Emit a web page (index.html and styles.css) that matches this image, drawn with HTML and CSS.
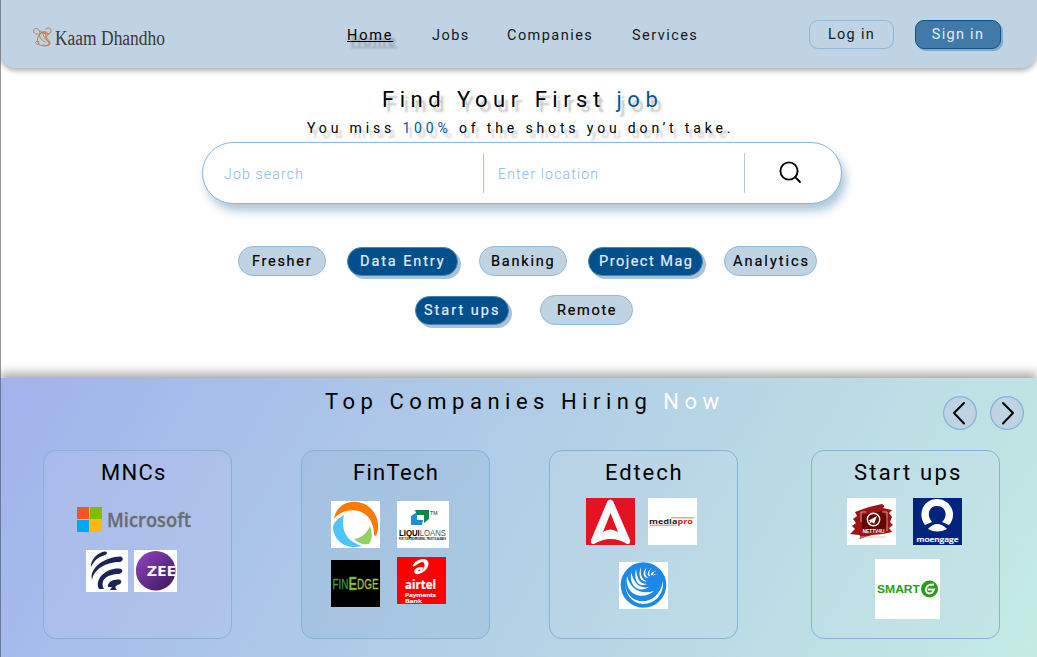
FILE: index.html
```html
<!DOCTYPE html>
<html lang="en">
<head>
<meta charset="utf-8">
<title>Kaam Dhandho</title>
<link rel="stylesheet" href="styles.css">
</head>
<body>
<div class="page">
  <header class="header">
    <svg class="brand" width="136" height="30" viewBox="0 0 136 30">
      <g fill="none" stroke="#c07b4c" stroke-width="1" stroke-linecap="round">
        <path d="M5 8C1 9-1 4 2 3C5 1 7 5 7 8M13 3C16 0 20 4 17 7C14 10 9 6 7 5"/>
        <path d="M6 9C11 2 18 8 14 10C11 12 18 14 17 18C15 21 8 20 4 18C1 17 3 14 6 16"/>
        <path d="M6 18C2 14 6 6 11 6C15 6 11 12 14 14C19 18 14 21 10 19"/>
        <path d="M7 8C5 10 8 14 12 16M10 6C9 10 13 13 16 17"/>
      </g>
      <text class="brand-name" x="22" y="19" textLength="110" lengthAdjust="spacingAndGlyphs">Kaam Dhandho</text>
    </svg>
    <nav class="nav">
      <a class="nav-link nav-home">Home</a>
      <a class="nav-link nav-jobs">Jobs</a>
      <a class="nav-link nav-companies">Companies</a>
      <a class="nav-link nav-services">Services</a>
    </nav>
    <div class="auth">
      <button class="btn">Log in</button>
      <button class="btn btn-primary">Sign in</button>
    </div>
  </header>

  <main class="hero">
    <h1 class="title">Find Your First <span class="accent">job</span></h1>
    <p class="tagline">You miss <span class="accent">100%</span> of the shots you don’t take.</p>
    <div class="search">
      <span class="field field-job">Job search</span>
      <span class="field field-place">Enter location</span>
      <span class="search-go">
        <svg width="24" height="24" viewBox="0 0 24 24" fill="none" stroke="#000" stroke-width="1.9" stroke-linecap="round"><circle cx="10" cy="10" r="8.6"/><path d="M16.2 16.2L21 21"/></svg>
      </span>
    </div>
    <div class="chips">
      <span class="chip fresher">Fresher</span>
      <span class="chip chip-on data">Data Entry</span>
      <span class="chip banking">Banking</span>
      <span class="chip chip-on project">Project Mag</span>
      <span class="chip analytics">Analytics</span>
    </div>
    <div class="chips chips-second">
      <span class="chip chip-on startups">Start ups</span>
      <span class="chip remote">Remote</span>
    </div>
  </main>

  <section class="companies">
    <div class="companies-head">
      <h2 class="companies-title">Top Companies Hiring <span class="now">Now</span></h2>
      <div class="arrows">
        <span class="arrow"><svg width="34" height="34" viewBox="0 0 34 34"><path d="M21 7L11 17L21 27.500"/></svg></span>
        <span class="arrow"><svg width="34" height="34" viewBox="0 0 34 34"><path d="M13 7L23 17L13 27.500"/></svg></span>
      </div>
    </div>
    <div class="cards">
      <article class="card card-mnc">
        <h3 class="card-title mnc">MNCs</h3>
        <svg class="logo-microsoft" width="120" height="30" viewBox="0 0 120 30">
          <path fill="#f65427" d="M0 0h12v12H0z"/><path fill="#80bc06" d="M13 0h12v12H13z"/><path fill="#05a6f0" d="M0 13h12v12H0z"/><path fill="#ffba08" d="M13 13h12v12H13z"/>
          <text x="30" y="20" font-family="Open Sans, sans-serif" font-weight="600" font-size="20" fill="#6b6c70" stroke="#6b6c70" stroke-width=".3" textLength="84" lengthAdjust="spacingAndGlyphs">Microsoft</text>
        </svg>
        <div class="logos mnc-row">
          <svg width="42" height="42" viewBox="0 0 42 42"><path fill="#fff" d="M0 0h42v42H0z"/><g fill="#1d2353"><path d="M5 17C4 10 12 2 19 1.500C22 1.500 21.500 4.500 18 5.500C12 7 8 11 5 17z"/><path d="M6 30C3 17 20 7 34 6.500C38 7 37.500 11 34 12C20 12 8 19 6 30z"/><path d="M13 39C8 29 20 18 33 18.500C38 19 37 23 33 24C23 24 13 29 18 39z"/><path d="M22 37C21 32 27 29 33 29.500C36 30 36 33 33 34.500C30 35 28 37 31 40L24 40L26 37z"/></g></svg>
          <svg width="43" height="42" viewBox="0 0 43 42"><defs><linearGradient id="zee" x1="0" y1="0" x2="1" y2="1"><stop stop-color="#9347c2"/><stop offset="1" stop-color="#3a1459"/></linearGradient></defs><path fill="#fff" d="M0 0h43v42H0z"/><circle cx="21.700" cy="20.700" r="19.800" fill="url(#zee)"/><text x="13" y="26" font-family="Open Sans, sans-serif" font-size="14" font-weight="700" fill="#fff" textLength="29" lengthAdjust="spacingAndGlyphs">ZEE</text></svg>
        </div>
      </article>

      <article class="card card-fintech">
        <h3 class="card-title fintech">FinTech</h3>
        <div class="logos fin-grid">
          <svg width="49" height="47" viewBox="0 0 49 47"><path fill="#fff" d="M0 0h49v47H0z"/><path fill="#ff7a00" d="M3 18C6-3 34-5 44 13C48 21 48 28 45 35L43 34C43 25 40 18 35 14C25 6 10 9 3 18z"/><path fill="#4fc4fa" d="M13 14C9 29 16 41 31 45C16 49 3 41 2 27C2 21 8 17 13 14z"/><path fill="#91d163" d="M39 25C42 34 41 38 38 43C32 44 27 42 23 38C31 37 36 32 39 25z"/></svg>
          <svg width="52" height="47" viewBox="0 0 52 47"><path fill="#fff" d="M0 0h52v47H0z"/><path fill="#208dd0" d="M14 15l6-4v8h6l-1 5H14z"/><path fill="#10854c" d="M18 9h14v9l-5 4v-8h-7z"/><text x="33" y="14" font-family="Liberation Sans, sans-serif" font-size="5.500" fill="#222" textLength="7.500" lengthAdjust="spacingAndGlyphs">TM</text><text x="2" y="35" font-family="Liberation Sans, sans-serif" font-size="8.700" fill="#555" textLength="47" lengthAdjust="spacingAndGlyphs"><tspan font-weight="700" fill="#000">LIQUI</tspan>LOANS</text><text x="2" y="39" font-family="Liberation Sans, sans-serif" font-size="2.600" font-weight="700" textLength="47" lengthAdjust="spacingAndGlyphs">FOR YOUR BORROWING, TRUST IS ALWAYS</text></svg>
          <svg class="finedge" width="49" height="47" viewBox="0 0 49 47"><path d="M0 0h49v47H0z"/><text x="1.500" y="28.500" font-family="Liberation Sans, sans-serif" font-size="14" fill="#3f9843" stroke="#3f9843" stroke-width=".3" textLength="46" lengthAdjust="spacingAndGlyphs">FIN<tspan font-size="18" font-weight="700" fill="#7ac53a" dy="1">E</tspan><tspan fill="#a7c23a" stroke="#a7c23a" dy="-1">DGE</tspan></text></svg>
          <svg width="49" height="47" viewBox="0 0 49 47"><path fill="#f00" d="M0 0h49v47H0z"/><path fill="#fff" fill-rule="evenodd" d="M16 8C20 1 31 0 31.500 6C32 13 23 18 19 17C15 15 18 10 24 10C28 10 27 13 24 13C22 12 20 14 22 14C26 13 29 9 27 6C25 3 20 8 18 9C16 10 15 9 16 8z"/><g font-family="Open Sans, sans-serif" fill="#fff" stroke="#fff" stroke-width=".2"><text x="8" y="31.500" font-size="12" font-weight="700" textLength="31" lengthAdjust="spacingAndGlyphs">airtel</text><text x="8" y="39.500" font-size="6" font-weight="600" textLength="31" lengthAdjust="spacingAndGlyphs">Payments</text><text x="8" y="45.800" font-size="6" font-weight="600" textLength="17" lengthAdjust="spacingAndGlyphs">Bank</text></g></svg>
        </div>
      </article>

      <article class="card card-edtech">
        <h3 class="card-title edtech">Edtech</h3>
        <div class="logos ed-row">
          <svg width="49" height="47" viewBox="0 0 49 47"><path fill="#e41323" d="M0 0h49v47H0z"/><path fill="#fff" d="M21.500 3Q24 0 27 3L44 42Q45 46 41 46Q25 36 8 46Q4 46 5 42zM24.500 15L17 34Q24 29 32 34z" fill-rule="evenodd"/></svg>
          <svg width="49" height="47" viewBox="0 0 49 47"><path fill="#fff" d="M0 0h49v47H0z"/><path stroke="#df5652" stroke-width=".8" d="M23 19.800h23M2 27.200h26"/><text x="1" y="26" font-family="Open Sans, sans-serif" font-weight="700" font-size="7.500" fill="#222" textLength="44" lengthAdjust="spacingAndGlyphs">media<tspan fill="#c92128">pro</tspan></text></svg>
        </div>
        <svg class="logo-wave" width="49" height="47" viewBox="0 0 49 47"><path fill="#fff" d="M0 0h49v47H0z"/><circle cx="24.500" cy="23" r="22.800" fill="#1e88e8"/><g fill="#fff"><path d="M6 19C6 46 40 46 44 19C46 47 6 52 6 19z"/><path d="M8 14C5 33 24 39 35 29C22 33 12 28 8 14z"/><path d="M12 10C10 26 21 31 30 25C20 27 15 21 12 10z"/><path d="M17 7C14 19 20 26 28 22C21 22 18 17 17 7z"/><path d="M22 5C18 15 23 21 28 19C23 18 21 13 22 5z"/><path d="M28 5C22 11 25 17 30 16C26 15 25 10 28 5z"/><path d="M33 6C27 10 28 15 32 14C29 13 30 9 33 6z"/><path d="M37 9C31 10 31 14 34 13C34 11 35 10 37 9z"/><path d="M40 13C37 11 34 12 34 14C36 12 38 12 40 13z"/></g></svg>
      </article>

      <article class="card card-startups">
        <h3 class="card-title starts">Start ups</h3>
        <div class="logos start-row">
          <svg width="49" height="47" viewBox="0 0 49 47"><path fill="#fff" d="M0 0h49v47H0z"/><path fill="#9d1517" d="M8 14Q20 9 35 6Q39 8 36 10L45 12L42 15L45 19L43 24L46 27L42 30L45 34L36 36L25 37L12 41Q15 38 12 37L3 36L8 31L5 28L9 25L6 21L10 18z"/><path fill="#620706" d="M15 17L36 13L41 21L38 34L15 33z"/><path fill="none" stroke="#e8b6b1" stroke-width=".8" d="M14 24V14h5M35 14h5v19M14 39h25"/><circle cx="26.500" cy="21.500" r="6.200" fill="none" stroke="#fff" stroke-width="1.400"/><path fill="#fff" d="M21 23l9-5-3 8-2-2-3 2 1-3z"/><text x="15.500" y="35" font-family="Liberation Sans, sans-serif" font-size="4.800" font-weight="700" fill="#fff" textLength="22" lengthAdjust="spacingAndGlyphs">NETTV4U</text></svg>
          <svg width="49" height="47" viewBox="0 0 49 47"><path fill="#00247d" d="M0 0h49v47H0z"/><path fill="#fff" fill-rule="evenodd" d="M12 27C4 17 10 1 24 1S45 17 36 27L29 24C36 17 32 8 24 8S13 17 19 24z"/><path fill="#fff" d="M15 31Q24 21 34 31Q24 36 15 31z"/><text x="3.500" y="44" font-family="Open Sans, sans-serif" font-size="7.800" font-weight="600" fill="#fff" stroke="#fff" stroke-width=".2" textLength="42" lengthAdjust="spacingAndGlyphs">moengage</text></svg>
        </div>
        <svg class="logo-smart" width="65" height="60" viewBox="0 0 65 60"><path fill="#fff" d="M0 0h65v60H0z"/><circle cx="54.500" cy="30" r="8.500" fill="#2a9d16"/><text x="2" y="34" font-family="Liberation Sans, sans-serif" font-size="11.500" font-weight="700" fill="#2a9d16" textLength="43" lengthAdjust="spacingAndGlyphs">SMART</text><path fill="none" stroke="#fff" stroke-width="1.800" d="M59 25.500L54 26C50 28 50 34 54 34.500L57 34L59 30.500H53"/></svg>
      </article>
    </div>
  </section>
</div>
</body>
</html>
```
FILE: styles.css
```css
* { box-sizing: border-box; }
body { margin: 0; font-family: Roboto, "Liberation Sans", sans-serif; color: #000; background: #fff; }
h1, h2, h3, p { margin: 0; }
.page { width: 1037px; height: 657px; overflow: hidden; display: flex; flex-direction: column; }
.page::after { content: ""; position: absolute; left: 0; top: 0; width: 1px; height: 657px; background: rgba(70, 70, 75, .55); }

.header { height: 68px; flex: none; display: flex; background: #c0d3e2; border-radius: 0 0 16px 16px; box-shadow: 0 3px 5px rgba(0, 0, 0, .3); }
.brand { margin: 26px 0 0 33px; flex: none; }
.brand-name { font: 20px "Liberation Serif", serif; fill: #3e3937; }
.nav { display: flex; margin: 27px 0 0 178px; font-size: 14.5px; line-height: 18px; letter-spacing: 1.45px; color: #15191c; }
.nav-link { white-space: nowrap; }
.nav-home { width: 85px; color: #000; letter-spacing: 1.8px; text-decoration: underline; text-decoration-thickness: 1px; text-shadow: 4px 6px 2px rgba(0, 0, 0, .3); }
.nav-jobs { width: 75px; }
.nav-companies { width: 125px; }
.nav-services { width: 67px; }
.auth { display: flex; gap: 21px; margin: 20px 0 0 110px; }
.btn { width: 85px; height: 29px; padding: 0; border: 1.5px solid #8ab8dc; border-radius: 9px; background: none; font: 14.5px/26px Roboto, sans-serif; letter-spacing: 1.3px; color: #15191c; }
.btn-primary { width: 86px; color: #e1edf6; background: #417aa8; border-color: #075794; box-shadow: 2px 2px 0 #82a9c7; }

.hero { height: 310px; flex: none; }
.accent { color: #07569a; }
.title { padding: 19px 0 0 382px; font-size: 22px; line-height: 26px; font-weight: 400; letter-spacing: 5.5px; text-shadow: 4px 5px 2px rgba(0, 0, 0, .25); white-space: nowrap; }
.tagline { padding: 5px 0 0 307px; font-size: 14px; line-height: 20px; letter-spacing: 3.85px; text-shadow: 4px 5px 2px rgba(0, 0, 0, .22); white-space: nowrap; }
.search { position: relative; margin: 4px 0 0 202px; width: 640px; height: 62px; border: 1.5px solid #86b4da; border-radius: 31px; background: #fff; box-shadow: 4px 7px 10px rgba(105, 155, 190, .55); display: flex; padding: 10px 0 0 21px; }
.field { height: 40px; font-size: 14px; line-height: 42px; font-weight: 300; color: #8ab6db; border-right: 1px solid #a9c9e2; white-space: nowrap; }
.field-job { width: 260px; letter-spacing: 1.2px; }
.field-place { width: 261px; padding-left: 14px; letter-spacing: 1.2px; }
.search-go { padding: 8px 0 0 34px; }
.chips { display: flex; margin: 42px 0 0 238px; align-items: center; }
.chips-second { margin: 19px 0 0 415px; }
.chip { height: 30px; border: 1px solid #8db9dc; border-radius: 15px; background: #c0d3e2; font-size: 14.5px; line-height: 30px; letter-spacing: 1.7px; padding-left: 13px; white-space: nowrap; -webkit-text-stroke: .2px; }
.chip-on { height: 29px; line-height: 28px; background: #00508d; border-color: #4384b5; color: #e4eef5; box-shadow: 3px 3px 0 #a9c2d8; }
.fresher { width: 88px; margin-right: 21px; }
.data { width: 111px; margin-right: 21px; padding-left: 12px; letter-spacing: 1.9px; }
.banking { width: 88px; margin-right: 21px; padding-left: 11px; letter-spacing: 1.8px; }
.project { width: 115px; margin-right: 21px; padding-left: 10px; letter-spacing: 1.5px; }
.analytics { width: 93px; padding-left: 8px; letter-spacing: 2px; }
.startups { width: 94px; margin-right: 31px; padding-left: 8px; letter-spacing: 2px; }
.remote { width: 93px; padding-left: 16px; }

.companies { height: 279px; flex: none; background: linear-gradient(120deg, #a0b3ec, #b3d0e6 52%, #c4ebe3); box-shadow: 0 -5px 10px rgba(0, 0, 0, .35); }
.companies-head { height: 72px; display: flex; }
.companies-title { width: 618px; margin: 11px 0 0 325px; font-size: 22px; line-height: 26px; font-weight: 400; letter-spacing: 5.5px; white-space: nowrap; }
.now { color: #fff; }
.arrows { display: flex; gap: 13px; margin-top: 18px; }
.arrow { width: 34px; height: 34px; border-radius: 50%; background: #c0d3e2; box-shadow: inset 0 0 0 1.3px #85b5dc; }
.arrow svg { display: block; fill: none; stroke: #000; stroke-width: 2; stroke-linecap: round; stroke-linejoin: round; }
.cards { display: flex; padding-left: 43px; }
.card { width: 189px; height: 189px; flex: none; border: 1.5px solid #83b3d7; border-radius: 13px; display: flex; flex-direction: column; align-items: flex-start; }
.card svg { display: block; flex: none; }
.card-mnc { background: rgba(185, 195, 235, .3); }
.card-fintech { margin-left: 69px; background: rgba(150, 185, 215, .35); }
.card-edtech { margin-left: 59px; background: rgba(195, 220, 232, .3); }
.card-startups { margin-left: 73px; background: rgba(200, 220, 235, .25); }
.card-title { height: 26px; margin-top: 8px; font-size: 22px; line-height: 27px; font-weight: 400; letter-spacing: 1.3px; white-space: nowrap; }
.mnc { margin-left: 57px; }
.fintech { margin-left: 51px; }
.edtech { margin-left: 55px; letter-spacing: 1.9px; }
.starts { margin-left: 42px; letter-spacing: 2.2px; }
.logos { display: flex; }
.logo-microsoft { margin: 22px 0 0 33px; }
.mnc-row { gap: 6px; margin: 13px 0 0 42px; }
.fin-grid { display: grid; grid-template-columns: 49px 52px; column-gap: 17px; row-gap: 9px; margin: 16px 0 0 29px; }
.finedge { margin-top: 3px; }
.ed-row { gap: 13px; margin: 13px 0 0 36px; }
.logo-wave { margin: 17px 0 0 69px; }
.start-row { gap: 17px; margin: 13px 0 0 35px; }
.logo-smart { margin: 14px 0 0 63px; }
```
